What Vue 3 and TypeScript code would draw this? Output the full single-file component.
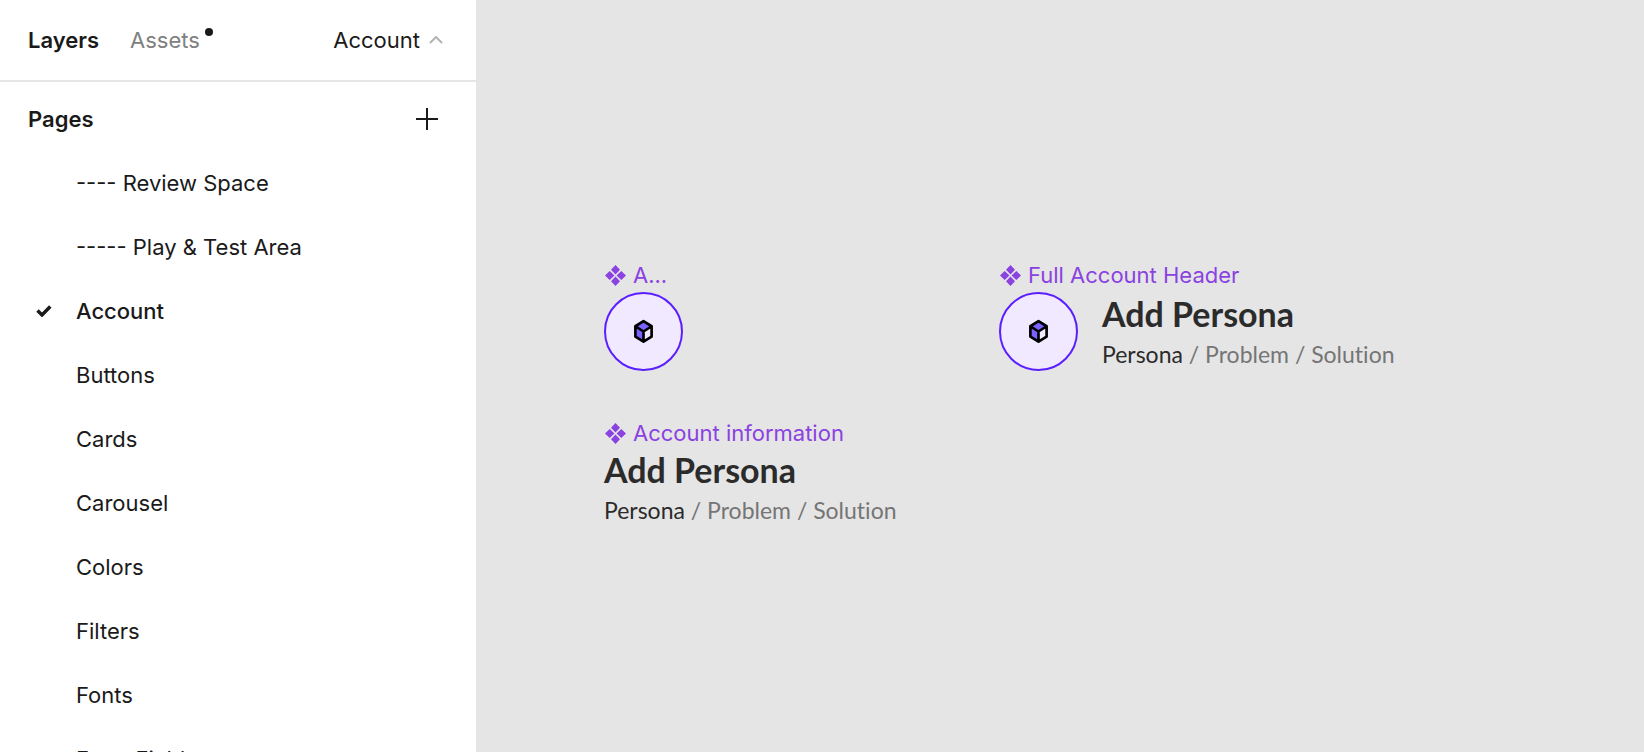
<script setup lang="ts">
import { ref } from 'vue'

const pages: string[] = [
  '---- Review Space',
  '----- Play & Test Area',
  'Account',
  'Buttons',
  'Cards',
  'Carousel',
  'Colors',
  'Filters',
  'Fonts',
  'Form Fields',
]
const current = ref('Account')

interface CanvasNode {
  id: string
  label: string
  avatar: boolean
  info: boolean
}

const nodes: CanvasNode[] = [
  { id: 'avatar', label: 'A...', avatar: true, info: false },
  { id: 'header', label: 'Full Account Header', avatar: true, info: true },
  { id: 'info', label: 'Account information', avatar: false, info: true },
]
</script>

<template>
  <div class="editor">
    <aside class="sidebar">
      <header class="tabs">
        <button type="button" class="tab active">Layers</button>
        <button type="button" class="tab">Assets<span class="dot"></span></button>
        <button type="button" class="page-toggle" aria-expanded="true">
          Account
          <svg width="14" height="8" viewBox="0 0 14 8" aria-hidden="true">
            <path d="M1 7 7 1l6 6" fill="none" stroke="#b3b3b3" stroke-width="2" />
          </svg>
        </button>
      </header>
      <section class="pages">
        <div class="pages-head">
          <h2>Pages</h2>
          <button type="button" class="add" aria-label="Add page">
            <svg width="22" height="22" viewBox="0 0 22 22" aria-hidden="true">
              <path d="M11 0v22M0 11h22" stroke="#1a1a1a" stroke-width="2" />
            </svg>
          </button>
        </div>
        <ul>
          <li v-for="page in pages" :key="page">
            <button
              type="button"
              class="page"
              :class="{ current: page === current }"
              @click="current = page"
            >
              <span class="mark">
                <svg v-if="page === current" width="16" height="12" viewBox="0 0 16 12" aria-hidden="true">
                  <path d="M1.5 5.5 6 10 14.3 1.5" fill="none" stroke="#1a1a1a" stroke-width="3.4" />
                </svg>
              </span>
              {{ page }}
            </button>
          </li>
        </ul>
      </section>
    </aside>

    <main class="canvas">
      <article v-for="node in nodes" :key="node.id" class="node" :class="node.id">
        <div class="label">
          <svg width="21" height="21" viewBox="0 0 22 22" aria-hidden="true">
            <path
              fill="#8a42e0"
              d="M11 0 15.700 4.900 11 9.900 6.300 4.900zM11 12.100l4.700 5L11 22l-4.700-4.900zM4.900 6.300 9.900 11l-5 4.700L0 11zM17.100 6.300 22 11l-4.900 4.700-5-4.700z"
            />
          </svg>
          {{ node.label }}
        </div>
        <div class="content">
          <div v-if="node.avatar" class="avatar-circle">
            <svg width="21" height="25" viewBox="0 0 22 26" aria-hidden="true">
              <path d="M11 2 19.5 7.500 11 13 2.500 7.500z" fill="#7b61ff" />
              <path d="M2.500 7.500 11 13v10.600l-8.500-5.300z" fill="#7b61ff" />
              <path d="M19.500 7.500 11 13v10.600l8.500-5.300z" fill="#f1e9ff" />
              <path
                d="M11 2.200 19.500 7.500v10.800L11 23.600l-8.500-5.300V7.500zM2.500 7.500 11 13l8.500-5.500M11 13v10.600"
                fill="none"
                stroke="#000"
                stroke-width="2.800"
                stroke-linejoin="round"
              />
            </svg>
          </div>
          <div v-if="node.info" class="info-text">
            <h3>Add Persona</h3>
            <p><strong>Persona</strong> / Problem / Solution</p>
          </div>
        </div>
      </article>
    </main>
  </div>
</template>

<style>
body {
  margin: 0;
}
</style>

<style scoped>
.editor {
  display: flex;
  height: 100vh;
  overflow: hidden;
  background: #e5e5e5;
  color: #1a1a1a;
  font: 400 22px/32px Inter, 'Liberation Sans', sans-serif;
}
button {
  padding: 0;
  border: 0;
  background: none;
  color: inherit;
  font: inherit;
  cursor: pointer;
}
h2,
h3,
p,
ul {
  margin: 0;
  padding: 0;
}
svg {
  display: block;
  flex: none;
}
.sidebar {
  flex: none;
  width: 476px;
  background: #fff;
}
.tabs {
  display: flex;
  align-items: center;
  height: 80px;
  padding: 0 33px 0 28px;
  border-bottom: 2px solid #e5e5e5;
}
.tab {
  position: relative;
  margin-right: 31px;
  color: #808080;
}
.tab.active {
  color: #1a1a1a;
  font-weight: 600;
}
.dot {
  position: absolute;
  top: 4px;
  right: -13px;
  width: 8px;
  height: 8px;
  border-radius: 50%;
  background: #1a1a1a;
}
.page-toggle {
  display: flex;
  align-items: center;
  gap: 9px;
  margin-left: auto;
}
.pages {
  padding-top: 5px;
}
.pages-head {
  display: flex;
  align-items: center;
  justify-content: space-between;
  height: 64px;
  padding: 0 38px 0 28px;
}
h2 {
  font-size: 22px;
  font-weight: 600;
}
ul {
  list-style: none;
}
.page {
  display: flex;
  align-items: center;
  width: 100%;
  height: 64px;
  padding-left: 36px;
  text-align: left;
}
.page.current {
  font-weight: 500;
}
.mark {
  width: 40px;
}
.canvas {
  position: relative;
  flex: 1;
}
.node {
  position: absolute;
  white-space: nowrap;
}
.node.avatar {
  left: 128px;
  top: 259px;
}
.node.header {
  left: 523px;
  top: 259px;
}
.node.info {
  left: 128px;
  top: 417px;
}
.label {
  display: flex;
  align-items: center;
  gap: 7px;
  padding-left: 1px;
  color: #8a42e0;
}
.content {
  display: flex;
  align-items: center;
  gap: 24px;
  padding-top: 1px;
}
.avatar-circle {
  display: flex;
  align-items: center;
  justify-content: center;
  box-sizing: border-box;
  width: 79px;
  height: 79px;
  border: 2px solid #5b1fff;
  border-radius: 50%;
  background: #f1e9ff;
}
.info-text {
  font-family: Lato, 'Open Sans', sans-serif;
  font-variant-ligatures: none;
}
h3 {
  color: #2b2b2b;
  font-size: 34px;
  font-weight: 700;
  line-height: 40px;
}
p {
  margin-top: 4px;
  color: #757575;
  font-size: 23px;
  line-height: 32px;
}
strong {
  color: #2b2b2b;
  font-weight: 400;
}
</style>
